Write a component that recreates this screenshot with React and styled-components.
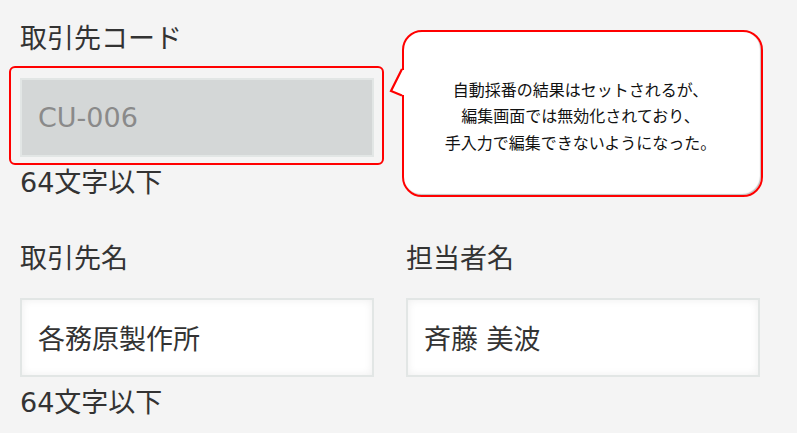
import React from "react";
import styled, { createGlobalStyle } from "styled-components";

const GlobalStyle = createGlobalStyle`
  html, body {
    margin: 0;
    padding: 0;
    background: #f4f4f4;
  }
  body {
    font-family: "DejaVu Sans", "Noto Sans CJK JP", sans-serif;
    color: #333;
  }
`;

const Form = styled.div`
  display: grid;
  grid-template-columns: 354px 354px;
  column-gap: 32px;
  row-gap: 40px;
  padding: 21px 0 0 20px;
`;

const Field = styled.div`
  display: flex;
  flex-direction: column;
`;

const Label = styled.div`
  font-size: 27px;
  line-height: 36px;
  margin-bottom: 21px;
`;

const InputWrap = styled.div`
  position: relative;
  ${(p) =>
    p.$highlight &&
    `
    &::before {
      content: "";
      position: absolute;
      top: -12px;
      left: -11px;
      right: -10px;
      bottom: -8px;
      border: 2px solid #f00;
      border-radius: 6px;
      pointer-events: none;
    }
  `}
`;

const Input = styled.div`
  box-sizing: border-box;
  height: 79px;
  display: flex;
  align-items: center;
  padding: 0 16px;
  border: 2px solid #e2e6e5;
  background: ${(p) => (p.$disabled ? "#d4d7d7" : "#fff")};
  box-shadow: ${(p) =>
    p.$disabled ? "none" : "inset 0 0 8px rgba(0,0,0,0.07)"};
  color: ${(p) => (p.$disabled ? "#8a8a8a" : "#333")};
  font-size: 27px;
  white-space: pre;
`;

const Help = styled.div`
  font-size: 27px;
  line-height: 36px;
  margin-top: 8px;
`;

const Callout = styled.div`
  position: relative;
  box-sizing: border-box;
  width: 361px;
  height: 167px;
  margin: 9px 0 0 -4px;
  background: #fff;
  border: 2px solid #f00;
  border-radius: 20px;
  box-shadow: inset -1px -1px 1px rgba(0, 0, 0, 0.25);
  display: flex;
  align-items: center;
  justify-content: center;
  text-align: center;
  font-family: "Noto Sans CJK JP", sans-serif;
  font-size: 16px;
  line-height: 26.5px;
  color: #111;
  padding: 4px 4px 0 0;
`;

const Tail = styled.svg`
  position: absolute;
  left: -15px;
  top: 34px;
  overflow: visible;
`;

function CalloutTail() {
  return (
    <Tail width="18" height="32" viewBox="0 0 18 32">
      <polygon points="13,4 2,25 13,29 18,29 18,4" fill="#fff" />
      <polyline
        points="13,3 2,25 13,29.5"
        fill="none"
        stroke="#f00"
        strokeWidth="2.2"
        strokeLinejoin="miter"
      />
    </Tail>
  );
}

export default function App() {
  return (
    <>
      <GlobalStyle />
      <Form>
        <Field>
          <Label>取引先コード</Label>
          <InputWrap $highlight>
            <Input $disabled>CU-006</Input>
          </InputWrap>
          <Help>64文字以下</Help>
        </Field>
        <Callout>
          <CalloutTail />
          <div>
            自動採番の結果はセットされるが、
            <br />
            編集画面では無効化されており、
            <br />
            手入力で編集できないようになった。
          </div>
        </Callout>
        <Field>
          <Label>取引先名</Label>
          <InputWrap>
            <Input>各務原製作所</Input>
          </InputWrap>
          <Help>64文字以下</Help>
        </Field>
        <Field>
          <Label>担当者名</Label>
          <InputWrap>
            <Input>斉藤 美波</Input>
          </InputWrap>
        </Field>
      </Form>
    </>
  );
}
